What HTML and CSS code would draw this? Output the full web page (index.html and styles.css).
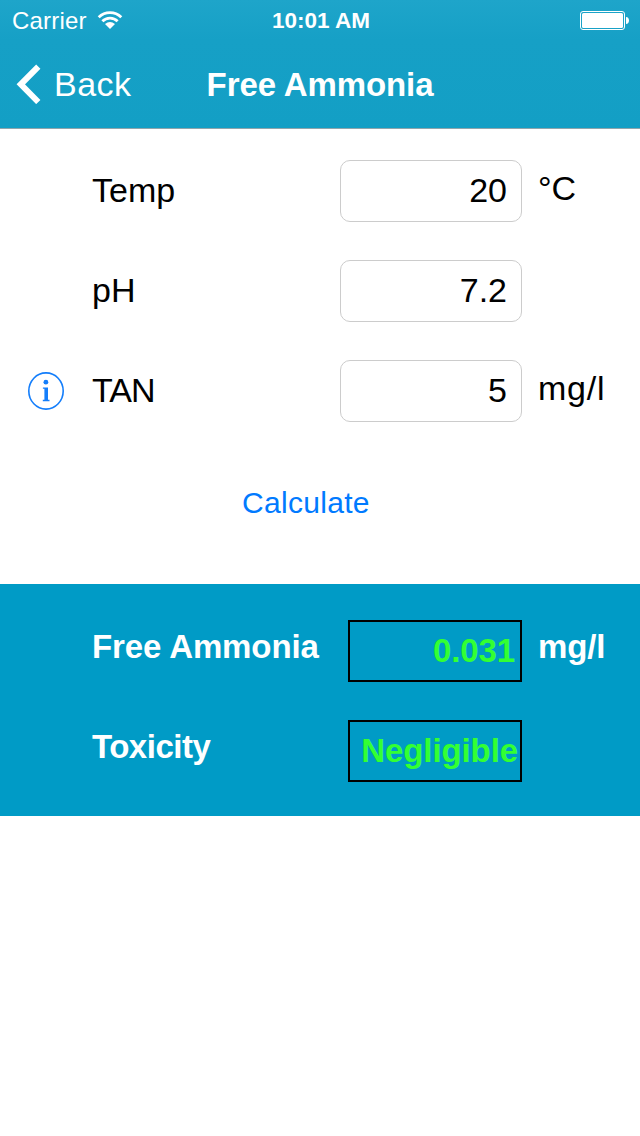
FILE: index.html
```html
<!DOCTYPE html>
<html lang="en">
<head>
    <meta charset="UTF-8">
    <meta name="viewport" content="width=device-width, initial-scale=1.0">
    <title>Free Ammonia</title>
    <link rel="stylesheet" href="styles.css">
</head>
<body>
    <header class="header">
        <div class="status-bar">
            <div class="carrier">
                <span>Carrier</span>
                <svg class="wifi" width="26" height="20" viewBox="0 0 26 20">
                    <g fill="none" stroke="#fff" stroke-width="2.8">
                        <path d="M1.7 7.3a16 16 0 0 1 22.6 0"/>
                        <path d="M5.4 11.3a10.7 10.7 0 0 1 15.2 0"/>
                    </g>
                    <path d="M13 19l-5-5a8 8 0 0 1 10 0z" fill="#fff"/>
                </svg>
            </div>
            <span class="time">10:01 AM</span>
            <svg class="battery" width="50" height="20" viewBox="0 0 50 20">
                <rect x="0.5" y="0.5" width="44" height="18" rx="2.5" fill="none" stroke="#fff"/>
                <rect x="2" y="2" width="41" height="15" rx="1.5" fill="#fff"/>
                <path d="M46 6c4 0 4 7 0 7z" fill="#fff"/>
            </svg>
        </div>
        <nav class="nav-bar">
            <a href="#" class="back">
                <svg width="25" height="40" viewBox="0 0 25 40">
                    <path d="M22.3 2.6L4.8 20.3 22.3 38" fill="none" stroke="#fff" stroke-width="6"/>
                </svg>
                <span>Back</span>
            </a>
            <h1 class="title">Free Ammonia</h1>
        </nav>
    </header>

    <main>
        <form class="form">
            <div class="row">
                <span class="label">Temp</span>
                <span class="field">20</span>
                <span class="unit">°C</span>
            </div>
            <div class="row">
                <span class="label">pH</span>
                <span class="field">7.2</span>
            </div>
            <div class="row">
                <svg class="info" width="36" height="38" viewBox="0 0 36 38">
                    <ellipse cx="18" cy="19" rx="17.2" ry="18.1" fill="none" stroke="#147efb" stroke-width="1.6"/>
                    <circle cx="17.9" cy="10.2" r="2.4" fill="#147efb"/>
                    <path d="M14.9 15.4h5.1v12.4h1.5v1.4h-6.7v-1.4h1.6v-11h-1.5z" fill="#147efb"/>
                </svg>
                <span class="label label-tan">TAN</span>
                <span class="field">5</span>
                <span class="unit unit-mgl">mg/l</span>
            </div>
            <button type="button" class="btn-calculate">Calculate</button>
        </form>

        <section class="results">
            <div class="row">
                <span class="label">Free Ammonia</span>
                <span class="result result-number">0.031</span>
                <span class="unit">mg/l</span>
            </div>
            <div class="row">
                <span class="label label-toxicity">Toxicity</span>
                <span class="result">Negligible</span>
            </div>
        </section>
    </main>
</body>
</html>
```
FILE: styles.css
```css
:root {
    --header: #16a0c6;
    --panel: #009bc6;
    --blue: #007aff;
    --green: #33ff33;
    --field-border: #cccccc;
}

* {
    margin: 0;
    padding: 0;
    box-sizing: border-box;
    font-family: "Liberation Sans", Helvetica, Arial, sans-serif;
}

body {
    background-color: white;
    color: black;
    font-size: 34px;
    min-height: 100vh;
}

svg {
    display: block;
    flex: none;
}

/* Header */
.header {
    height: 129px;
    background: linear-gradient(#1ea5ca, var(--header) 40px, #139fc5);
    border-bottom: 1px solid #8fa5ac;
    color: white;
}

.status-bar {
    display: grid;
    grid-template-columns: 1fr auto 1fr;
    height: 40px;
    padding: 0 10px 0 12px;
    font-size: 24px;
    line-height: 41px;
}

.carrier {
    display: flex;
    gap: 10px;
    letter-spacing: 0.2px;
}

.wifi {
    margin-top: 10px;
}

.time {
    font-size: 22.5px;
    font-weight: 700;
    line-height: 42px;
}

.battery {
    justify-self: end;
    margin-top: 11px;
}

.nav-bar {
    display: grid;
    grid-template-columns: 1fr auto 1fr;
    height: 88px;
    padding: 0 16px;
    line-height: 88px;
}

.back {
    display: flex;
    align-items: center;
    gap: 13px;
    height: 88px;
    color: white;
    letter-spacing: 0.5px;
    text-decoration: none;
}

.title {
    font-size: 33px;
    font-weight: 700;
    letter-spacing: -0.1px;
    line-height: 90px;
}

/* Rows */
.row {
    display: grid;
    grid-template-columns: 64px 248px 182px 1fr;
    height: 62px;
    line-height: 60px;
    padding-left: 28px;
}

.info {
    grid-column: 1;
    grid-row: 1;
    align-self: center;
}

.label {
    grid-column: 2;
    white-space: nowrap;
}

.label-tan {
    letter-spacing: -1px;
}

.label-toxicity {
    letter-spacing: -0.5px;
}

.field {
    grid-column: 3;
    border: 1px solid var(--field-border);
    border-radius: 10px;
    padding-right: 14px;
    line-height: 58px;
    text-align: right;
}

.unit {
    grid-column: 4;
    padding-left: 16px;
    line-height: 56px;
}

.unit-mgl {
    letter-spacing: 0.8px;
}

/* Input form */
.form {
    display: flex;
    flex-direction: column;
    gap: 38px;
    height: 455px;
    padding-top: 31px;
}

.btn-calculate {
    align-self: flex-start;
    margin: 15px 0 0 242px;
    border: none;
    background: none;
    color: var(--blue);
    font-size: 30px;
    letter-spacing: 0.3px;
    line-height: 56px;
    cursor: pointer;
}

/* Results panel */
.results {
    display: flex;
    flex-direction: column;
    gap: 38px;
    height: 232px;
    padding-top: 36px;
    background-color: var(--panel);
    color: white;
    font-size: 33px;
    font-weight: 700;
    letter-spacing: -0.1px;
}

.results .label,
.results .unit {
    line-height: 54px;
}

.result {
    grid-column: 3;
    margin-left: 8px;
    border: 2px solid black;
    padding-right: 2px;
    color: var(--green);
    line-height: 58px;
    text-align: right;
}

.result-number {
    padding-right: 5px;
}
```
